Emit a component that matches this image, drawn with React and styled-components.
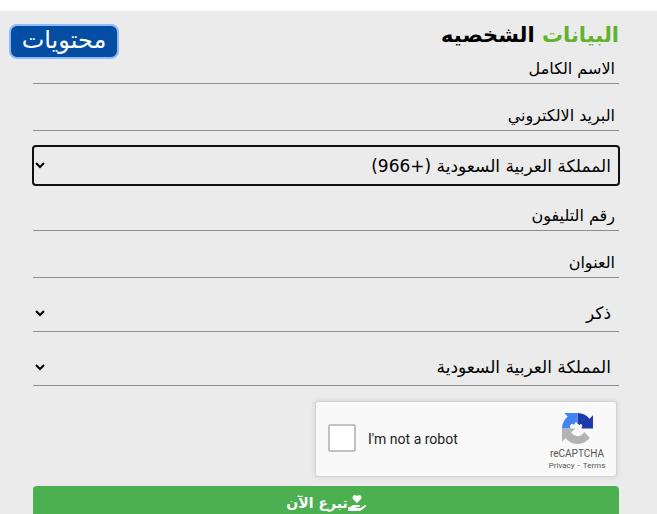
import React from "react";
import styled, { createGlobalStyle } from "styled-components";
import { FaHandHoldingHeart } from "react-icons/fa";

export default function App() {
  return (
    <>
      <GlobalStyle />
      <Page dir="rtl">
        <Badge>محتويات</Badge>
        <Form onSubmit={(event) => event.preventDefault()}>
          <Title>
            <TitleAccent>البيانات</TitleAccent> الشخصيه
          </Title>
          <Input type="text" aria-label="الاسم الكامل" placeholder="الاسم الكامل" />
          <Input type="email" dir="rtl" aria-label="البريد الالكتروني" placeholder="البريد الالكتروني" />
          <Select aria-label="المملكة العربية السعودية (+966)" $active>
            <option>المملكة العربية السعودية (+966)</option>
          </Select>
          <Input type="tel" dir="rtl" aria-label="رقم التليفون" placeholder="رقم التليفون" />
          <Input type="text" aria-label="العنوان" placeholder="العنوان" />
          <Select aria-label="ذكر">
            <option>ذكر</option>
          </Select>
          <Select aria-label="المملكة العربية السعودية">
            <option>المملكة العربية السعودية</option>
          </Select>
          <Captcha />
          <DonateButton type="submit">
            <FaHandHoldingHeart size={18} />
            تبرع الآن
          </DonateButton>
        </Form>
      </Page>
    </>
  );
}

function Captcha() {
  return (
    <CaptchaBox dir="ltr">
      <CaptchaLabel>
        <CaptchaCheck type="checkbox" />
        I'm not a robot
      </CaptchaLabel>
      <CaptchaBrand>
        <CaptchaLogo />
        <CaptchaName>reCAPTCHA</CaptchaName>
        <CaptchaLinks>
          <a href="#privacy">Privacy</a>
          <span>-</span>
          <a href="#terms">Terms</a>
        </CaptchaLinks>
      </CaptchaBrand>
    </CaptchaBox>
  );
}

function CaptchaLogo() {
  return (
    <svg width="31" height="31" viewBox="0 0 64 64" aria-hidden="true">
      <path
        fill="#1c3aa9"
        d="M64 31.955l-.033-1.37V4.687l-7.16 7.16C50.948 4.674 42.033.093 32.05.093V22l4 3 3-3 3 4-2 6H64"
      />
      <path
        fill="#4285f4"
        d="M32.05.094l-1.37.033H4.594l7.16 7.16C4.58 13.147 0 22.06 0 32.046h18l-2-5 4-5 5 2 3-5 4 1V.095"
      />
      <path
        fill="#b3b3b3"
        d="M.001 32.045l.033 1.37v25.898l7.16-7.16c5.86 7.173 14.774 11.754 24.76 11.754 10.4 0 19.622-4.96 25.458-12.64l-11.736-11.86a15.55 15.55 0 0 1-4.754 5.334c-2.05 1.6-4.952 2.906-8.968 2.906-.485 0-.86-.057-1.135-.163-4.976-.393-9.288-3.14-11.828-7.124l8.307-8.307c-10.522.04-22.4.066-27.295-.005"
      />
    </svg>
  );
}

const GlobalStyle = createGlobalStyle`
  body {
    margin: 0;
    background-color: #fff;
    font-family: "DejaVu Sans", "Noto Sans", sans-serif;
    overflow: hidden;
  }
`;

const Page = styled.main`
  position: relative;
  box-sizing: border-box;
  min-height: 100vh;
  margin-top: 11px;
  padding: 0 38px 0 33px;
  background-color: #ebebeb;
`;

const Badge = styled.div`
  position: absolute;
  top: 13px;
  left: 9px;
  box-sizing: border-box;
  width: 110px;
  height: 35px;
  border: 2px solid #8dbdf8;
  border-radius: 8px;
  background-color: #034ea2;
  color: #fff;
  font-size: 24px;
  line-height: 28px;
  text-align: center;
`;

const Form = styled.form`
  display: flex;
  flex-direction: column;
  gap: 16px;
`;

const Title = styled.h1`
  margin: 0 0 -16px;
  padding-top: 6px;
  color: #000;
  font-size: 21px;
  line-height: 36px;
`;

const TitleAccent = styled.span`
  color: #62b22f;
`;

const Input = styled.input`
  box-sizing: border-box;
  width: 100%;
  height: 31px;
  padding: 0 4px;
  border: 0;
  border-bottom: 1px solid #8f8f8f;
  outline: 0;
  background-color: transparent;
  font-family: inherit;
  font-size: 16px;

  &::placeholder {
    color: #000;
    opacity: 1;
  }
`;

const Select = styled.select`
  box-sizing: content-box;
  height: ${({ $active }) => ($active ? "39px" : "37px")};
  margin: ${({ $active }) => ($active ? "-1px 0" : "0")};
  padding: 0 4px;
  border: 0;
  border-bottom: ${({ $active }) => ($active ? "0" : "1px solid #8f8f8f")};
  border-radius: ${({ $active }) => ($active ? "3px" : "0")};
  outline: ${({ $active }) => ($active ? "2px solid #101010" : "0")};
  outline-offset: -1px;
  background-color: #ebebeb;
  color: #000;
  font-family: inherit;
  font-size: 17px;
`;

const CaptchaBox = styled.div`
  display: flex;
  justify-content: space-between;
  box-sizing: border-box;
  width: 302px;
  height: 76px;
  margin: -1px 2px 0 0;
  border: 1px solid #d3d3d3;
  border-radius: 3px;
  background-color: #f9f9f9;
  box-shadow: 0 0 4px 1px rgba(0, 0, 0, 0.08);
  font-family: Roboto, sans-serif;
`;

const CaptchaLabel = styled.label`
  display: flex;
  align-items: center;
  gap: 12px;
  padding-left: 12px;
  color: #222;
  font-size: 14px;
`;

const CaptchaCheck = styled.input`
  appearance: none;
  box-sizing: border-box;
  width: 28px;
  height: 28px;
  margin: 0 0 2px;
  border: 2px solid #c1c1c1;
  border-radius: 2px;
  background-color: #fff;
`;

const CaptchaBrand = styled.div`
  display: flex;
  flex-direction: column;
  align-items: center;
  width: 78px;
  padding-top: 11px;
  color: #555;
`;

const CaptchaName = styled.div`
  margin-top: 4px;
  font-size: 10px;
  line-height: 12px;
`;

const CaptchaLinks = styled.div`
  display: flex;
  gap: 3px;
  font-size: 8px;
  line-height: 12px;

  a {
    color: inherit;
    text-decoration: none;
  }
`;

const DonateButton = styled.button`
  display: flex;
  justify-content: center;
  align-items: center;
  height: 33px;
  margin-top: -7px;
  border: 0;
  border-radius: 4px;
  background-color: #4caf50;
  color: #fff;
  font-family: inherit;
  font-size: 14px;
  font-weight: bold;
`;
